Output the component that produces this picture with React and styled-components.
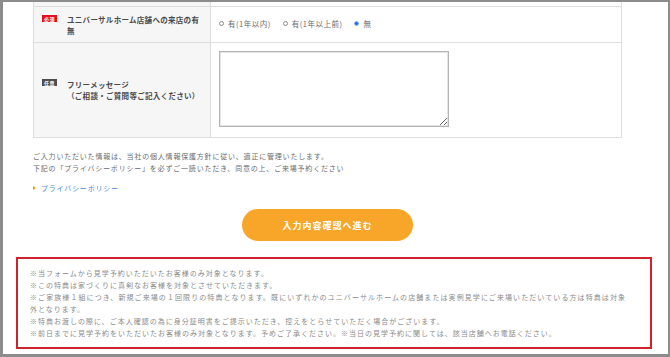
import React from "react";
import styled, { createGlobalStyle } from "styled-components";

const GlobalStyle = createGlobalStyle`
  html, body {
    margin: 0;
    padding: 0;
    background: #ffffff;
  }
  body {
    font-family: "Noto Sans CJK JP", "Noto Sans", sans-serif;
  }
`;

const notes = [
  "※当フォームから見学予約いただいたお客様のみ対象となります。",
  "※この特典は家づくりに真剣なお客様を対象とさせていただきます。",
  "※ご家族様１組につき、新規ご来場の１回限りの特典となります。既にいずれかのユニバーサルホームの店舗または実例見学にご来場いただいている方は特典は対象外となります。",
  "※特典お渡しの際に、ご本人確認の為に身分証明書をご提示いただき、控えをとらせていただく場合がございます。",
  "※前日までに見学予約をいただいたお客様のみ対象となります。予めご了承ください。※当日の見学予約に関しては、該当店舗へお電話ください。",
];

const visitOptions = [
  { label: "有(1年以内)", checked: false },
  { label: "有(1年以上前)", checked: false },
  { label: "無", checked: true },
];

const App = () => {
  return (
    <>
      <GlobalStyle />
      <Frame>
        <Column>
          <FormTable>
            <StubRow>
              <LabelCell />
              <ValueCell />
            </StubRow>
            <Row $height={35}>
              <LabelCell>
                <Badge $required>必須</Badge>
                <LabelText>ユニバーサルホーム店舗への来店の有無</LabelText>
              </LabelCell>
              <ValueCell>
                <RadioGroup>
                  {visitOptions.map((opt) => (
                    <RadioOption key={opt.label}>
                      <RadioDot $checked={opt.checked} />
                      <RadioLabel>{opt.label}</RadioLabel>
                    </RadioOption>
                  ))}
                </RadioGroup>
              </ValueCell>
            </Row>
            <Row $height={94}>
              <LabelCell>
                <Badge>任意</Badge>
                <LabelText>
                  フリーメッセージ
                  <br />
                  （ご相談・ご質問等ご記入ください）
                </LabelText>
              </LabelCell>
              <ValueCell $top>
                <Message />
              </ValueCell>
            </Row>
          </FormTable>

          <Privacy>
            ご入力いただいた情報は、当社の個人情報保護方針に従い、適正に管理いたします。
            <br />
            下記の「プライバシーポリシー」を必ずご一読いただき、同意の上、ご来場予約ください
          </Privacy>

          <PolicyLink>
            <Arrow />
            <PolicyText>プライバシーポリシー</PolicyText>
          </PolicyLink>

          <SubmitButton type="button">入力内容確認へ進む</SubmitButton>
        </Column>

        <NoteBox>
          {notes.map((n) => (
            <Note key={n}>{n}</Note>
          ))}
        </NoteBox>
      </Frame>
    </>
  );
};

const Frame = styled.div`
  width: 670px;
  height: 357px;
  box-sizing: border-box;
  border-style: solid;
  border-color: #8c8c8c;
  border-width: 2px 2px 3px 3px;
  background: #ffffff;
  overflow: hidden;
`;

const Column = styled.div`
  margin-left: 30px;
  width: 589px;
  display: flex;
  flex-direction: column;
`;

const FormTable = styled.div`
  border-left: 1px solid #dedede;
  border-right: 1px solid #dedede;
  border-bottom: 1px solid #dedede;
`;

const Row = styled.div`
  display: grid;
  grid-template-columns: 177px 1fr;
  border-top: 1px solid #dedede;
  height: ${(p) => p.$height}px;
`;

const StubRow = styled(Row)`
  border-top: none;
  height: 4px;
`;

const LabelCell = styled.div`
  background: #f6f6f6;
  border-right: 1px solid #dedede;
  display: flex;
  align-items: center;
  padding: 0 6px 0 8px;
  gap: 10px;
`;

const ValueCell = styled.div`
  display: flex;
  align-items: ${(p) => (p.$top ? "flex-start" : "center")};
  padding: ${(p) => (p.$top ? "8px 8px 0" : "0 8px 3px")};
`;

const Badge = styled.span`
  flex: 0 0 auto;
  align-self: flex-start;
  margin-top: ${(p) => (p.$required ? "8px" : "36px")};
  width: 15px;
  height: 7px;
  background: ${(p) => (p.$required ? "#e50d1f" : "#4d4d4d")};
  color: #ffffff;
  font-size: 5px;
  font-weight: 700;
  line-height: 7px;
  text-align: center;
  letter-spacing: 0.5px;
`;

const LabelText = styled.div`
  width: 136px;
  font-size: 7.5px;
  font-weight: 700;
  letter-spacing: 0.3px;
  line-height: 11px;
  color: #4a4a4a;
`;

const RadioGroup = styled.div`
  display: flex;
  align-items: center;
  gap: 12px;
`;

const RadioOption = styled.label`
  display: flex;
  align-items: center;
  gap: 4px;
`;

const RadioDot = styled.span`
  width: 5px;
  height: 5px;
  box-sizing: border-box;
  border-radius: 50%;
  border: 1px solid ${(p) => (p.$checked ? "#8bb7f0" : "#8a8a8a")};
  background: ${(p) => (p.$checked ? "#1a6fe6" : "#ffffff")};
`;

const RadioLabel = styled.span`
  font-size: 7.5px;
  letter-spacing: 0.5px;
  color: #6a6a6a;
`;

const Message = styled.textarea`
  width: 230px;
  height: 76px;
  box-sizing: border-box;
  margin: 0;
  border: 1px solid #b4b4b4;
  box-shadow: inset 0 0 0 1px #e4e4e4;
  background: #ffffff;
  resize: both;
`;

const Privacy = styled.p`
  margin: 12px 0 0;
  font-size: 7px;
  letter-spacing: 0.8px;
  line-height: 12px;
  color: #6b6b6b;
`;

const PolicyLink = styled.a`
  margin-top: 8px;
  display: flex;
  align-items: center;
  gap: 5px;
  height: 12px;
`;

const Arrow = styled.span`
  width: 0;
  height: 0;
  border-top: 2.5px solid transparent;
  border-bottom: 2.5px solid transparent;
  border-left: 3px solid #f29b1d;
`;

const PolicyText = styled.span`
  font-size: 7px;
  letter-spacing: 0.8px;
  color: #4a8fd8;
`;

const SubmitButton = styled.button`
  margin: 15px auto 0;
  width: 171px;
  height: 32px;
  border: none;
  border-radius: 16px;
  background: #f8a62a;
  color: #ffffff;
  font-family: "Noto Sans CJK JP", "Noto Sans", sans-serif;
  font-size: 9px;
  font-weight: 700;
  letter-spacing: 1px;
  padding: 0;
`;

const NoteBox = styled.div`
  margin: 16px 0 0 13px;
  width: 636px;
  box-sizing: border-box;
  border: 2px solid #d0222c;
  padding: 8px 24px 8px 12px;
`;

const Note = styled.p`
  margin: 0;
  font-size: 7px;
  letter-spacing: 1px;
  line-height: 12px;
  color: #8a8a8a;
  text-align: justify;
`;

export default App;
